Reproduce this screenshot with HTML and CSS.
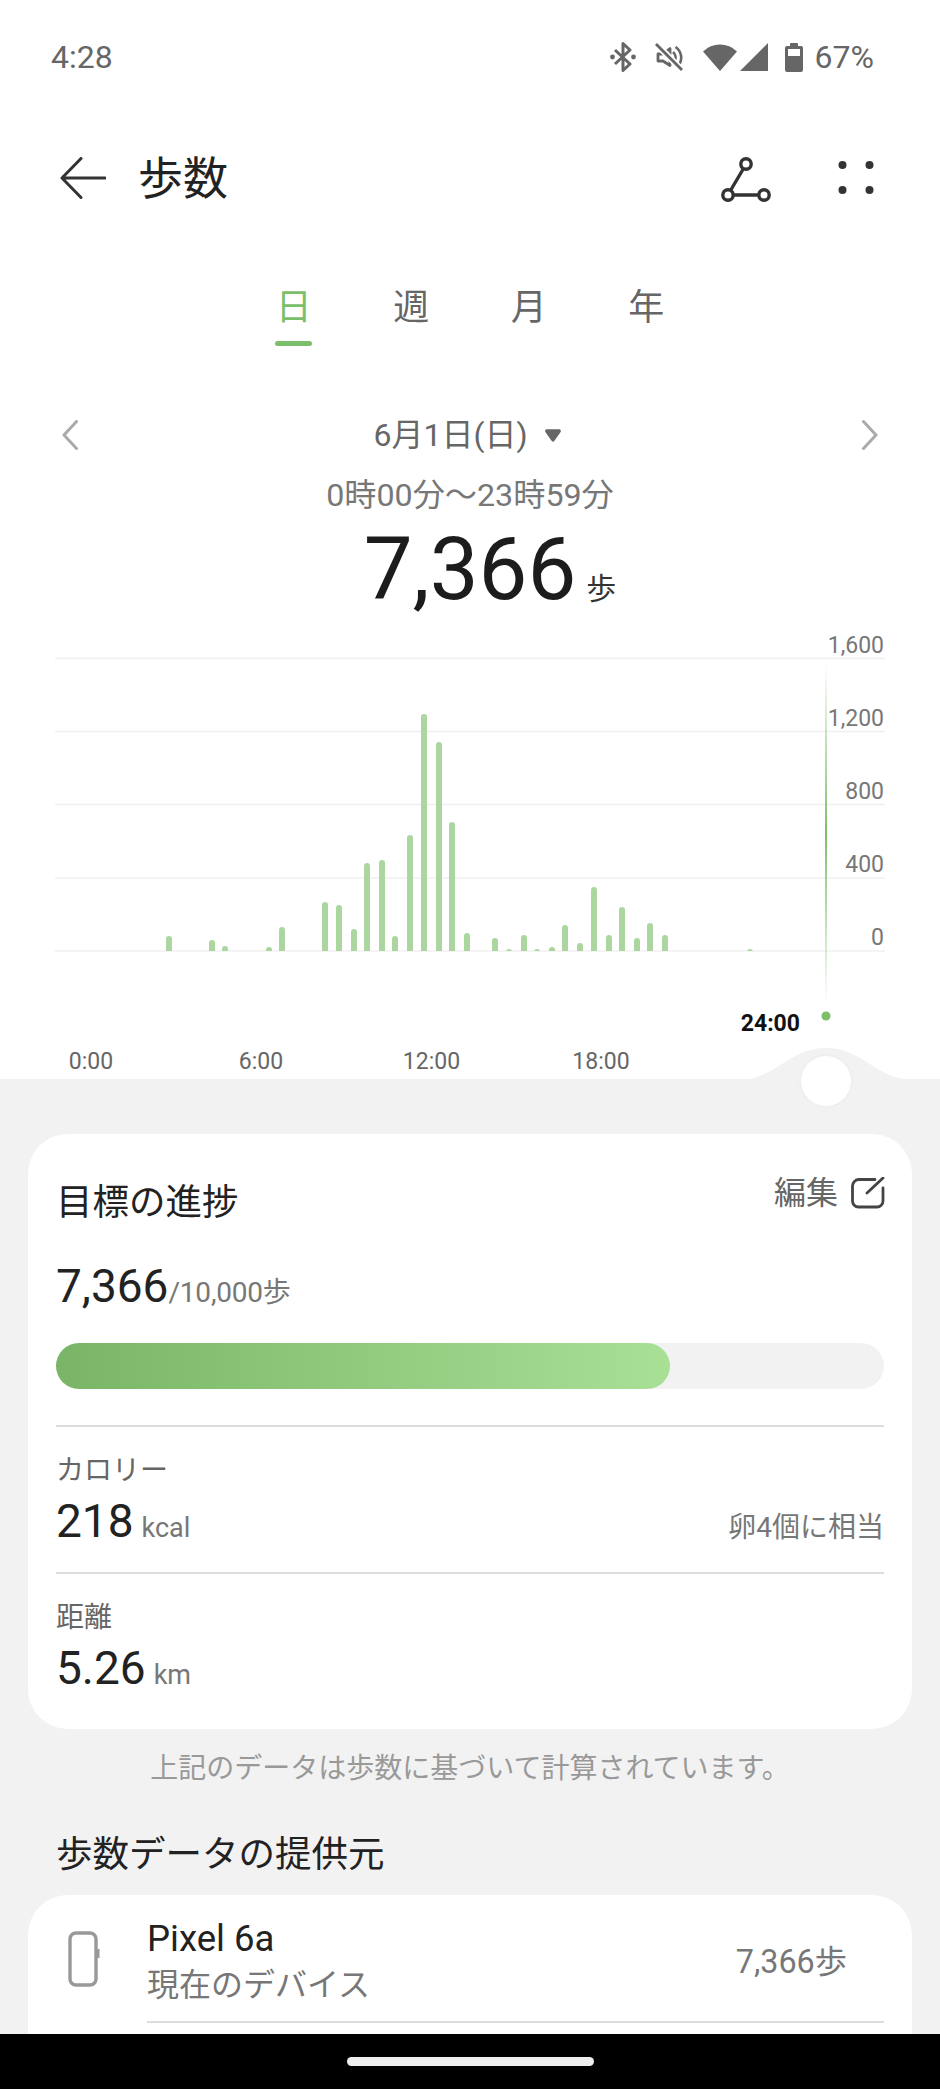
FILE: index.html
```html
<!DOCTYPE html>
<html lang="ja">
<head>
<meta charset="utf-8">
<title>歩数</title>
<link rel="stylesheet" href="styles.css">
</head>
<body>
<div class="phone">
  <div class="status">
    <span class="clock">4:28</span>
    <div class="status-icons">
      <svg class="ic-bt" width="26" height="30" viewBox="0 0 26 30"><path d="M5 8 L20 22 L13 28.5 V1.5 L20 8 L5 22" fill="none" stroke="#666" stroke-width="3" stroke-linejoin="round"/><circle cx="2.5" cy="15" r="2.4" fill="#666"/><circle cx="23.5" cy="15" r="2.4" fill="#666"/></svg>
      <svg class="ic-mute" width="28" height="28" viewBox="0 0 28 28"><path d="M3 11 H8 L15 5.5 V22.5 L8 18 H3 Z" fill="none" stroke="#666" stroke-width="2.8" stroke-linejoin="round"/><path d="M18 9 a7 7 0 0 1 1.5 9 M20.5 4 a13 13 0 0 1 3.5 18" fill="none" stroke="#666" stroke-width="2.6"/><path d="M1 1 L27 27" stroke="#fff" stroke-width="6.5"/><path d="M1 1 L27 27" stroke="#666" stroke-width="2.8"/></svg>
      <svg class="ic-wifi" width="34" height="28" viewBox="0 0 34 28"><path d="M0 8.5 A24 24 0 0 1 34 8.5 L17 28 Z" fill="#666"/></svg>
      <svg class="ic-signal" width="28" height="28" viewBox="0 0 28 28"><path d="M0 28 L28 0 V28 Z" fill="#666"/></svg>
      <svg class="ic-batt" width="18" height="29" viewBox="0 0 18 29"><path d="M5 3 V1 a1 1 0 0 1 1 -1 h6 a1 1 0 0 1 1 1 V3 h3 a2 2 0 0 1 2 2 V27 a2 2 0 0 1 -2 2 H2 a2 2 0 0 1 -2 -2 V5 a2 2 0 0 1 2 -2 Z" fill="#666"/><rect x="3" y="6" width="12" height="7" fill="#fff"/></svg>
      <span class="pct">67%</span>
    </div>
  </div>

  <div class="appbar">
    <svg class="back" width="46" height="42" viewBox="0 0 46 42"><path d="M21 1.5 L2 21 L21 40.5 M2 21 H45" fill="none" stroke="#333" stroke-width="3" stroke-linecap="round" stroke-linejoin="round"/></svg>
    <h1 class="title">歩数</h1>
    <svg class="share" width="50" height="46" viewBox="0 0 50 46"><g fill="none" stroke="#333" stroke-width="3.4"><circle cx="25" cy="7" r="5.2"/><circle cx="7" cy="38" r="5.2"/><circle cx="43" cy="38" r="5.2"/><path d="M22.5 11.5 L9.5 33.5 M12.2 38 H37.8"/></g></svg>
    <svg class="more" width="36" height="34" viewBox="0 0 36 34"><g fill="#333"><circle cx="4.5" cy="4" r="4"/><circle cx="31.5" cy="4" r="4"/><circle cx="4.5" cy="29" r="4"/><circle cx="31.5" cy="29" r="4"/></g></svg>
  </div>

  <div class="tabs">
    <div class="tab tab-on"><span class="tab-label">日</span><i class="tab-bar"></i></div>
    <div class="tab"><span class="tab-label">週</span></div>
    <div class="tab"><span class="tab-label">月</span></div>
    <div class="tab"><span class="tab-label">年</span></div>
  </div>

  <div class="daterow">
    <svg width="18" height="30" viewBox="0 0 18 30"><path d="M15.5 1.5 L3 15 L15.5 28.5" fill="none" stroke="#aaa" stroke-width="3" stroke-linecap="round" stroke-linejoin="round"/></svg>
    <div class="date"><span>6月1日(日)</span><svg width="16" height="13" viewBox="0 0 18 14"><path d="M2 0 H16 a2 2 0 0 1 1.6 3 L10.6 13 a2 2 0 0 1 -3.2 0 L0.4 3 A2 2 0 0 1 2 0 Z" fill="#666"/></svg></div>
    <svg width="18" height="30" viewBox="0 0 18 30"><path d="M2.5 1.5 L15 15 L2.5 28.5" fill="none" stroke="#aaa" stroke-width="3" stroke-linecap="round" stroke-linejoin="round"/></svg>
  </div>
  <div class="range">0時00分～23時59分</div>
  <div class="total"><span class="total-num">7,366</span><span class="total-unit">歩</span></div>

  <div class="chart">
    <svg class="chart-svg" width="940" height="500" viewBox="0 613 940 500">
      <defs>
        <clipPath id="base"><rect x="0" y="613" width="940" height="338"/></clipPath>
        <linearGradient id="cursor" x1="0" y1="0" x2="0" y2="1">
          <stop offset="0" stop-color="#7cbf6b" stop-opacity="0"/>
          <stop offset="0.5" stop-color="#7cbf6b"/>
          <stop offset="1" stop-color="#7cbf6b" stop-opacity="0"/>
        </linearGradient>
      </defs>
      <g class="grid">
        <line x1="55" x2="885" y1="658.5" y2="658.5"/>
        <line x1="55" x2="885" y1="731.5" y2="731.5"/>
        <line x1="55" x2="885" y1="804.5" y2="804.5"/>
        <line x1="55" x2="885" y1="878" y2="878"/>
        <line x1="55" x2="885" y1="951" y2="951"/>
      </g>
      <g class="bars" clip-path="url(#base)">
        <rect x="166" y="936" width="6" height="20" rx="3"/>
        <rect x="209" y="940" width="6" height="16" rx="3"/>
        <rect x="222" y="946" width="6" height="10" rx="3"/>
        <rect x="266" y="947" width="6" height="9" rx="3"/>
        <rect x="279" y="927" width="6" height="29" rx="3"/>
        <rect x="322" y="902" width="6" height="54" rx="3"/>
        <rect x="336" y="905" width="6" height="51" rx="3"/>
        <rect x="351" y="929" width="6" height="27" rx="3"/>
        <rect x="364" y="863" width="6" height="93" rx="3"/>
        <rect x="379" y="860" width="6" height="96" rx="3"/>
        <rect x="392" y="936" width="6" height="20" rx="3"/>
        <rect x="407" y="835" width="6" height="121" rx="3"/>
        <rect x="421" y="714" width="6" height="242" rx="3"/>
        <rect x="436" y="742" width="6" height="214" rx="3"/>
        <rect x="449" y="822" width="6" height="134" rx="3"/>
        <rect x="464" y="933" width="6" height="23" rx="3"/>
        <rect x="492" y="938" width="6" height="18" rx="3"/>
        <rect x="506" y="949" width="6" height="7" rx="3"/>
        <rect x="521" y="935" width="6" height="21" rx="3"/>
        <rect x="534" y="949" width="6" height="7" rx="3"/>
        <rect x="549" y="947" width="6" height="9" rx="3"/>
        <rect x="562" y="925" width="6" height="31" rx="3"/>
        <rect x="577" y="943" width="6" height="13" rx="3"/>
        <rect x="591" y="887" width="6" height="69" rx="3"/>
        <rect x="606" y="935" width="6" height="21" rx="3"/>
        <rect x="619" y="907" width="6" height="49" rx="3"/>
        <rect x="634" y="938" width="6" height="18" rx="3"/>
        <rect x="647" y="923" width="6" height="33" rx="3"/>
        <rect x="662" y="935" width="6" height="21" rx="3"/>
        <rect x="747" y="949" width="6" height="7" rx="3"/>
      </g>
      <g class="ylabels">
        <text x="884" y="653">1,600</text>
        <text x="884" y="726">1,200</text>
        <text x="884" y="799">800</text>
        <text x="884" y="872">400</text>
        <text x="884" y="945">0</text>
      </g>
      <rect x="825" y="663" width="2" height="340" fill="url(#cursor)"/>
      <circle cx="826" cy="1016" r="4.5" fill="#7cbf6b"/>
      <text class="now" x="800" y="1031">24:00</text>
      <g class="xlabels">
        <text x="91" y="1069">0:00</text>
        <text x="261" y="1069">6:00</text>
        <text x="431.5" y="1069">12:00</text>
        <text x="601" y="1069">18:00</text>
      </g>
      <path class="bump" d="M740 1080 C775 1079 790 1048 826 1048 C862 1048 877 1079 912 1080 Z"/>
      <circle class="knob-halo" cx="826" cy="1081" r="27"/>
      <circle class="knob" cx="826" cy="1081" r="25"/>
    </svg>
  </div>

  <div class="sheet">
    <section class="card">
      <div class="card-head">
        <h2 class="card-title">目標の進捗</h2>
        <div class="edit"><span>編集</span>
          <svg width="34" height="32" viewBox="0 0 34 32"><path d="M24 2.5 H8 a6.5 6.5 0 0 0 -6.5 6.5 V24 a6 6 0 0 0 6 6 H26 a6 6 0 0 0 6 -6 V11 M32 1 L16 16" fill="none" stroke="#444" stroke-width="2.8" stroke-linecap="round"/></svg>
        </div>
      </div>
      <div class="goal"><span class="big">7,366</span><span class="goal-of">/10,000歩</span></div>
      <div class="track"><div class="fill"></div></div>
      <div class="metric">
        <div class="metric-label">カロリー</div>
        <div class="metric-row"><span class="big">218</span><span class="metric-unit">kcal</span><span class="metric-note">卵4個に相当</span></div>
      </div>
      <div class="metric metric-last">
        <div class="metric-label">距離</div>
        <div class="metric-row"><span class="big">5.26</span><span class="metric-unit">km</span></div>
      </div>
    </section>
    <p class="note">上記のデータは歩数に基づいて計算されています。</p>
    <h2 class="source-title">歩数データの提供元</h2>
    <section class="card card-source">
      <div class="device">
        <svg class="device-ic" width="32" height="56" viewBox="0 0 32 56"><rect x="2" y="2" width="26" height="52" rx="6" fill="none" stroke="#999" stroke-width="3.4"/><rect x="29" y="18" width="2.5" height="9" fill="#999"/></svg>
        <div class="device-text">
          <div class="device-name">Pixel 6a</div>
          <div class="device-sub">現在のデバイス</div>
        </div>
        <div class="device-steps">7,366歩</div>
      </div>
      <div class="device-rule"></div>
    </section>
  </div>

  <div class="nav"><i class="pill"></i></div>
</div>
</body>
</html>
```
FILE: styles.css
```css
* { box-sizing: border-box; }
html, body { margin: 0; padding: 0; }
body {
  width: 940px;
  height: 2089px;
  background: #fff;
  font-family: Roboto, "Noto Sans CJK JP", sans-serif;
  color: #222;
  overflow: hidden;
}
h1, h2, p { margin: 0; font-weight: 400; }
.phone { width: 940px; height: 2089px; display: flex; flex-direction: column; overflow: hidden; }

.status { height: 114px; flex: none; padding: 0 66px 0 51px; display: flex; align-items: center; justify-content: space-between; color: #666; }
.clock { font-size: 32px; font-weight: 400; }
.status-icons { display: flex; align-items: center; }
.ic-mute { margin-left: 19px; }
.ic-wifi { margin-left: 20px; }
.ic-signal { margin-left: 3px; }
.ic-batt { margin-left: 17px; }
.pct { margin-left: 12px; font-size: 32px; }

.appbar { height: 128px; flex: none; padding: 0 66px 0 60px; display: flex; align-items: center; }
.title { margin: 4px 0 0 32px; font-size: 45px; line-height: 56px; flex: 1; }
.more { margin-left: 67px; }
.share { margin-top: 3px; }

.tabs { height: 104px; flex: none; display: flex; justify-content: center; }
.tab { width: 117.5px; display: flex; flex-direction: column; align-items: center; color: #666; }
.tab-label { margin-top: 49px; font-size: 36px; line-height: 34px; }
.tab-on { color: #7cbf6b; }
.tab-bar { margin-top: 16px; width: 37px; height: 5px; border-radius: 3px; background: #7cbf6b; }

.daterow { margin-top: 66px; height: 46px; flex: none; padding: 0 61px; display: flex; align-items: center; justify-content: space-between; }
.date { display: flex; align-items: center; gap: 17px; margin-right: 6px; font-size: 32px; line-height: 46px; color: #666; }
.range { margin-top: 17px; height: 40px; flex: none; text-align: center; font-size: 32.2px; line-height: 40px; color: #777; }
.total { margin-top: 10px; height: 88px; flex: none; display: flex; justify-content: center; align-items: baseline; color: #1c1c1c; }
.total-num { font-size: 87px; line-height: 88px; }
.total-unit { margin-left: 10px; margin-right: -46px; font-size: 30px; line-height: 30px; color: #333; width: 36px; }

.chart { position: relative; height: 466px; flex: none; }
.chart-svg { position: absolute; left: 0; top: 0; z-index: 1; }
.grid line { stroke: #f0f0f0; stroke-width: 1.5; }
.bars rect { fill: #abd6a0; }
.ylabels text { font-size: 23px; fill: #777; text-anchor: end; }
.xlabels text { font-size: 23px; fill: #666; text-anchor: middle; }
.now { font-size: 23px; font-weight: 700; fill: #111; text-anchor: end; }
.bump { fill: #f2f2f2; }
.knob-halo { fill: #efefef; }
.knob { fill: #fff; }

.sheet { flex: 1; min-height: 0; overflow: hidden; background: #f2f2f2; padding: 55px 28px 0; }
.card { background: #fff; border-radius: 40px; padding: 0 28px 33px; }
.card-head { padding-top: 39px; height: 92px; display: flex; justify-content: space-between; align-items: flex-start; }
.card-title { margin-top: 5px; font-size: 36.5px; line-height: 50px; }
.edit { display: flex; align-items: center; gap: 13px; margin-right: -1px; font-size: 32px; line-height: 40px; color: #666; }
.big { font-size: 46px; line-height: 56px; color: #222; }
.goal { margin-top: 32px; height: 56px; display: flex; align-items: baseline; }
.goal-of { margin-left: 0; font-size: 28px; line-height: 36px; color: #777; letter-spacing: -0.2px; }
.track { margin-top: 29px; height: 46px; border-radius: 23px; background: #f2f2f2; }
.fill { width: 614px; height: 46px; border-radius: 23px; background: linear-gradient(90deg, #7ab567, #a8e095); }
.metric { margin-top: 36px; border-top: 2px solid #ddd; padding-top: 26px; }
.metric-last { margin-top: 23px; }
.metric-label { font-size: 28px; line-height: 36px; color: #666; }
.metric-row { margin-top: 4px; height: 56px; display: flex; align-items: baseline; }
.metric-unit { margin-left: 8px; font-size: 27px; line-height: 36px; color: #777; }
.metric-note { margin-left: auto; font-size: 28px; line-height: 36px; color: #777; }

.note { margin-top: 20px; text-align: center; font-size: 28px; line-height: 40px; color: #999; }
.source-title { margin: 41px 0 0 28px; font-size: 36.5px; line-height: 50px; }
.card-source { margin-top: 15px; height: 200px; padding: 22px 28px 0 40px; }
.device { display: flex; align-items: center; height: 90px; }
.device-ic { margin-top: -6px; }
.device-text { margin-left: 47px; }
.device-name { font-size: 36.5px; line-height: 44px; color: #222; }
.device-sub { margin-top: 2px; font-size: 32px; line-height: 44px; color: #777; }
.device-steps { margin-left: auto; margin-right: 37px; font-size: 32.3px; line-height: 44px; color: #777; }
.device-rule { margin: 14px 0 0 79px; height: 2px; background: #ddd; }

.nav { height: 55px; flex: none; background: #000; display: flex; align-items: center; justify-content: center; }
.pill { width: 247px; height: 9px; border-radius: 5px; background: #eee; }
```
